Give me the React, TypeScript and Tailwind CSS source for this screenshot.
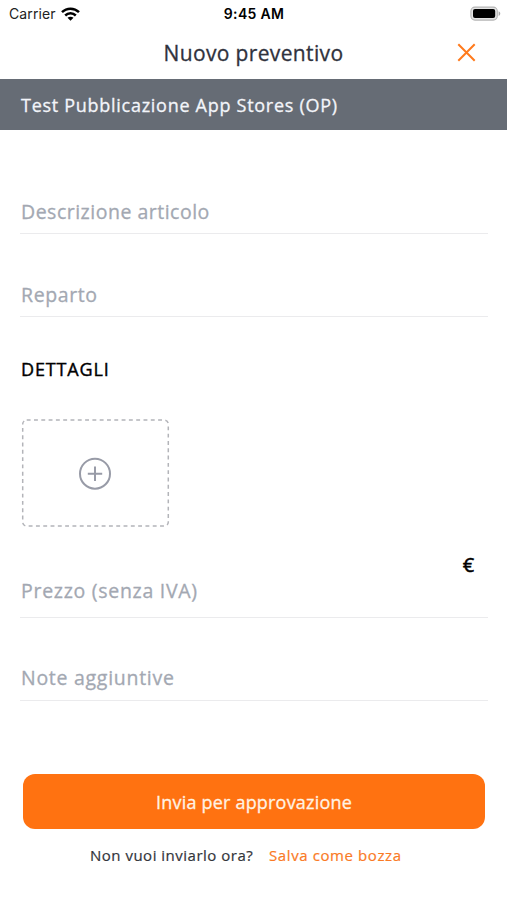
import type { ReactNode } from "react";

function WifiIcon() {
  return (
    <svg width="19" height="14" viewBox="0 0 19 14" fill="none" stroke="#000" strokeWidth="2.5">
      <path d="M1 5.200C5.800.5 13.200.5 18 5.200" />
      <path d="M4.200 8.500c3-2.900 7.600-2.900 10.600 0" />
      <path d="M9.500 13.800 6.500 10.800c1.800-1.500 4.200-1.500 6 0z" fill="#000" stroke="none" />
    </svg>
  );
}

function BatteryIcon() {
  return (
    <svg width="31" height="16" viewBox="0 0 31 16">
      <rect x=".9" y="1.100" width="26.400" height="13" rx="4" fill="#e4e4e4" stroke="#b5b5b5" strokeWidth="1.100" />
      <rect x="3" y="3.100" width="22.200" height="9" rx="2" fill="#000" />
      <path d="M28.600 5.300c2.200.7 2.200 4 0 4.700z" fill="#a9a9a9" />
    </svg>
  );
}

function Field({ className, children }: { className: string; children: ReactNode }) {
  return (
    <div
      className={`mr-[19px] ml-5 flex items-end border-b border-[#ebebed] pl-px text-[19.5px] leading-[26px] text-[#a3a8b2] ${className}`}
    >
      {children}
    </div>
  );
}

export default function App() {
  return (
    <div className="flex h-[900px] w-[507px] flex-col overflow-hidden bg-white font-['Open_Sans',sans-serif] [-webkit-text-stroke:0.3px]">
      {/* Status bar */}
      <div className="grid h-7 shrink-0 grid-cols-3 items-center pl-[9px] pr-[6px] font-['Inter',sans-serif] text-[14px] leading-7 [-webkit-text-stroke:0]">
        <div className="flex items-center gap-[5px] text-[#222]">
          <span className="tracking-[0.1px]">Carrier</span>
          <WifiIcon />
        </div>
        <span className="-ml-[2px] text-center text-[14px] font-semibold tracking-[0.3px] text-black">9:45 AM</span>
        <div className="flex justify-end">
          <BatteryIcon />
        </div>
      </div>

      {/* Header */}
      <header className="grid h-[51px] shrink-0 grid-cols-[1fr_auto_1fr] items-center">
        <span />
        <h1 className="text-[21px] tracking-[0.35px] text-[#30323d]">Nuovo preventivo</h1>
        <button aria-label="Chiudi" className="mr-[31px] mb-[2px] justify-self-end">
          <svg width="19" height="19" viewBox="0 0 19 19" stroke="#ff7a1c" strokeWidth="2">
            <path d="m1.300 1.300 16.400 16.400M17.700 1.300 1.300 17.700" />
          </svg>
        </button>
      </header>
      <div className="flex h-[51px] shrink-0 items-center bg-[#666c75] pt-px pl-[21px] text-[18px] tracking-[0.72px] text-[#f3f5fa]">
        Test Pubblicazione App Stores (OP)
      </div>

      {/* Form */}
      <Field className="mt-[60px] h-11 pb-[8px] tracking-[0.5px]">
        <span>Descrizione articolo</span>
      </Field>
      <Field className="mt-10 h-[43px] pb-[8px] tracking-[0.6px]">
        <span>Reparto</span>
      </Field>

      <h2 className="mt-[40px] ml-[21px] h-6 text-[18px] leading-6 tracking-[0.85px] text-black [-webkit-text-stroke:0.4px]">
        DETTAGLI
      </h2>
      <button aria-label="Aggiungi foto" className="mt-[38px] ml-[21px] h-[109px] w-[149px] shrink-0">
        <svg width="149" height="109" viewBox="0 0 149 109" fill="none">
          <rect x="1.700" y="1.100" width="145.600" height="106" rx="4" stroke="#b3b4b9" strokeWidth="1.500" strokeDasharray="3.900 3.400" />
          <g stroke="#989ba7" strokeWidth="2">
            <circle cx="74" cy="54.700" r="15" />
            <path d="M74 47.500v14.400M66.800 54.700h14.400" />
          </g>
        </svg>
      </button>

      <Field className="mt-[24px] h-[66px] justify-between pb-[13px] tracking-[0.72px]">
        <span>Prezzo (senza IVA)</span>
        <span className="mr-[13px] self-start text-[20px] text-black [-webkit-text-stroke:0.5px]">€</span>
      </Field>
      <Field className="mt-[39px] h-[44px] pb-[9px] tracking-[0.72px]">
        <span>Note aggiuntive</span>
      </Field>

      {/* Actions */}
      <button className="mt-[73px] mr-[22px] ml-[23px] h-[55px] shrink-0 rounded-[12px] bg-[#ff7211] pt-px text-[18px] tracking-[0.2px] text-[#fff3e4]">
        Invia per approvazione
      </button>
      <div className="mt-[14px] ml-[90px] flex items-center text-[15px] leading-6 tracking-[0.5px] [-webkit-text-stroke:0.2px]">
        <span className="w-[179px] text-[#33353b]">Non vuoi inviarlo ora?</span>
        <a className="tracking-[0.6px] text-[#fa7a25]">Salva come bozza</a>
      </div>
    </div>
  );
}
